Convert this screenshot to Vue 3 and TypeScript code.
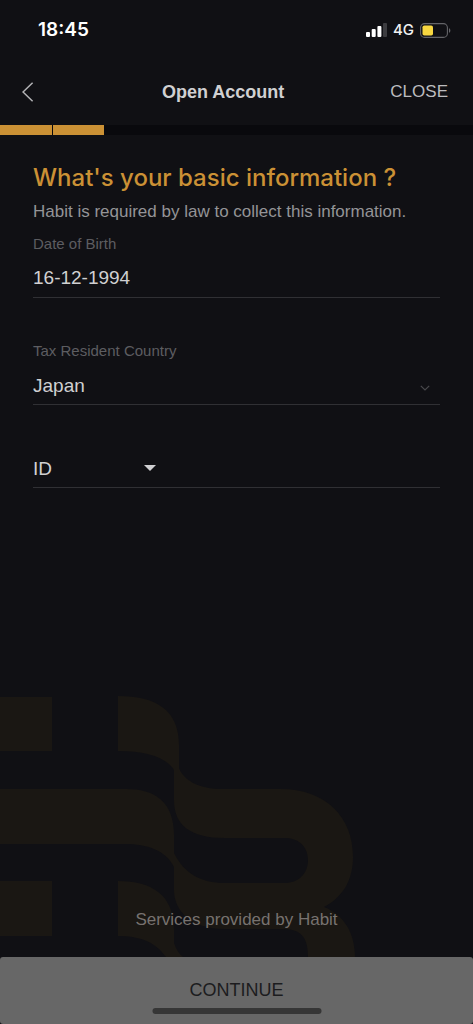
<script setup lang="ts">
import { ref } from 'vue'

const birthDate = ref('16-12-1994')
const country = ref('Japan')
const idType = ref('ID')
const idNumber = ref('')
const totalSteps = 9
const completedSteps = 2
</script>

<template>
  <div class="screen">
    <div class="status">
      <span class="clock">18:45</span>
      <div class="indicators">
        <svg width="21" height="14" viewBox="0 0 21 14" aria-hidden="true">
          <rect x="0" y="9" width="4" height="5" rx="1" fill="#fff" />
          <rect x="5.7" y="6" width="4" height="8" rx="1" fill="#fff" />
          <rect x="11.4" y="3" width="4" height="11" rx="1" fill="#fff" />
          <rect x="17" y="0" width="4" height="14" rx="1" fill="#3c3c40" />
        </svg>
        <span class="network">4G</span>
        <svg width="31" height="15" viewBox="0 0 31 15" aria-hidden="true">
          <rect x="0.6" y="0.6" width="26.8" height="13.8" rx="4" fill="none" stroke="#646468" stroke-width="1.1" />
          <rect x="2.5" y="2.5" width="10.5" height="10" rx="1.8" fill="#f8d740" />
          <path d="M29 5.2c1.8.7 1.8 3.9 0 4.6z" fill="#646468" />
        </svg>
      </div>
    </div>

    <header class="header">
      <button class="back" type="button" aria-label="Back">
        <svg width="12" height="20" viewBox="0 0 12 20" aria-hidden="true">
          <path d="M10.6 0.8L1 10l9.6 9.2" fill="none" stroke="#b4b4b7" stroke-width="1.5" />
        </svg>
      </button>
      <h1 class="title">Open Account</h1>
      <button class="close" type="button">CLOSE</button>
    </header>

    <div class="progress">
      <span v-for="n in totalSteps" :key="n" class="step" :class="{ done: n <= completedSteps }"></span>
    </div>

    <main class="content">
      <h2 class="question">What's your basic information ?</h2>
      <p class="note">Habit is required by law to collect this information.</p>

      <div class="field">
        <label class="label" for="birth">Date of Birth</label>
        <input id="birth" v-model="birthDate" class="control" type="text" />
      </div>

      <div class="field">
        <label class="label" for="country">Tax Resident Country</label>
        <div class="row">
          <select id="country" v-model="country" class="control">
            <option>Japan</option>
          </select>
          <svg class="chevron" width="10" height="6" viewBox="0 0 10 6" aria-hidden="true">
            <path d="M0.8 0.8L5 5l4.2-4.2" fill="none" stroke="#49494d" stroke-width="1.2" />
          </svg>
        </div>
      </div>

      <div class="field">
        <div class="row">
          <div class="picker">
            <select v-model="idType" class="control" aria-label="Identification type">
              <option>ID</option>
            </select>
            <svg width="12" height="6" viewBox="0 0 12 6" aria-hidden="true">
              <path d="M0 0h12L6 6z" fill="#d0d0d2" />
            </svg>
          </div>
          <input v-model="idNumber" class="control number" type="text" aria-label="Identification number" />
        </div>
      </div>
    </main>

    <svg class="watermark" width="356" height="262" viewBox="0 0 356 262" aria-hidden="true">
      <g fill="#1a1713">
        <path d="M0 2h52v54H0zM0 186h52v55H0z" />
        <path
          d="M118 1C156 1 179 15 179 50V73C184 86 200 94 222 94H280C326 94 353 122 353 162C353 185 343 202 324 212C344 220 355 238 355 262H308C308 245 303 234 284 234H225C190 234 174 215 174 195V172C166 155 146 149 126 149H0V94H126C154 94 174 106 174 140V158C184 178 200 188 225 188H285C298 188 308 179 308 165S298 143 285 143H225C190 143 174 130 174 105V75C166 62 146 56 118 56z"
        />
        <path d="M118 186C152 186 174 200 174 235V248C176 254 179 259 183 262H166C155 246 138 241 118 241z" />
      </g>
    </svg>

    <footer class="footer">
      <p class="provider">Services provided by Habit</p>
      <button class="continue" type="button">CONTINUE</button>
      <span class="home"></span>
    </footer>
  </div>
</template>

<style>
body {
  margin: 0;
  background: #101014;
}
</style>

<style scoped>
.screen {
  position: relative;
  display: flex;
  flex-direction: column;
  min-height: 100vh;
  background: #101014;
  color: #d0d0d2;
  font-family: "Liberation Sans", Arial, sans-serif;
}

button,
input,
select {
  margin: 0;
  padding: 0;
  border: 0;
  border-radius: 0;
  background: none;
  color: inherit;
  font-family: inherit;
  appearance: none;
  outline: none;
}

.status {
  display: flex;
  align-items: center;
  justify-content: space-between;
  height: 60px;
  padding: 0 22px 0 38px;
}

.clock {
  color: #fff;
  font: 600 19px/24px Inter, sans-serif;
}

.indicators {
  display: flex;
  align-items: center;
  gap: 6px;
}

.network {
  color: #f0f0f2;
  font: 500 15px/16px Inter, sans-serif;
}

.header {
  display: flex;
  align-items: center;
  justify-content: space-between;
  height: 65px;
  padding: 0 25px 2px 22px;
  box-sizing: border-box;
}

.back {
  display: flex;
  width: 34px;
}

.title {
  margin: 0;
  font-size: 18px;
  line-height: 24px;
  font-weight: 700;
}

.close {
  color: #bcbcbf;
  font-size: 17px;
  line-height: 24px;
}

.progress {
  display: flex;
  gap: 1px;
  height: 10px;
  background: #09090d;
}

.step {
  flex: 1;
}

.done {
  background: #cb9135;
}

.content {
  flex: 1;
  padding: 28px 33px 0;
}

.question {
  margin: 0;
  color: #cb9135;
  font: 500 24px/30px Inter, sans-serif;
}

.note {
  margin: 8px 0 12px;
  color: #949497;
  font-size: 17px;
  line-height: 22px;
}

.field {
  margin-bottom: 44px;
  border-bottom: 1px solid #303034;
}

.label {
  display: block;
  margin-bottom: 6px;
  color: #5d5d61;
  font-size: 15px;
  line-height: 18px;
}

.control {
  display: block;
  width: 100%;
  height: 38px;
  font-size: 19px;
}

.row,
.picker {
  display: flex;
  align-items: center;
}

.chevron {
  flex: none;
  margin: 6px 10px 0 0;
}

.picker {
  flex: none;
  width: 123px;
}

.picker svg {
  flex: none;
}

.number {
  flex: 1;
  min-width: 0;
  margin-left: 20px;
}

.watermark {
  position: absolute;
  left: 0;
  bottom: 67px;
}

.footer {
  position: relative;
  text-align: center;
}

.provider {
  margin: 0 0 26px;
  color: #77726f;
  font-size: 17px;
  line-height: 22px;
}

.continue {
  display: block;
  width: 100%;
  height: 67px;
  border-radius: 3px;
  background: #676767;
  color: #1c1c1e;
  font-size: 18px;
}

.home {
  position: absolute;
  left: 50%;
  bottom: 10px;
  width: 169px;
  height: 6px;
  border-radius: 3px;
  background: #363636;
  transform: translateX(-50%);
}
</style>
